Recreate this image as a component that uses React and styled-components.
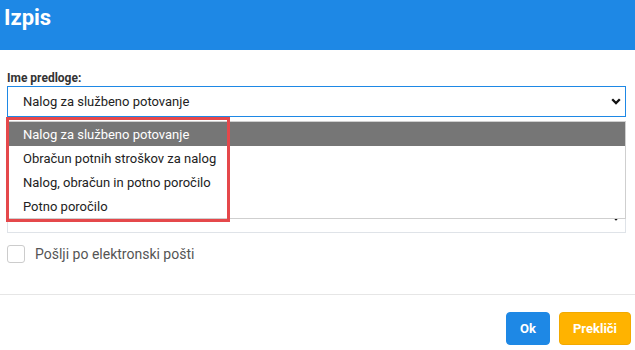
import React from "react";
import styled, { createGlobalStyle } from "styled-components";

const Global = createGlobalStyle`
  html, body { margin: 0; padding: 0; background: #fff; }
  body { font-family: Roboto, "Liberation Sans", Arial, sans-serif; }
  * { box-sizing: border-box; }
`;

const Dialog = styled.div`
  width: 635px;
  height: 350px;
  display: flex;
  flex-direction: column;
  background: #fff;
  overflow: hidden;
`;

const Header = styled.div`
  height: 50px;
  flex: none;
  background: #1e88e5;
  padding: 5px 4px 0;
`;

const Title = styled.h1`
  margin: 0;
  color: #fff;
  font-size: 22px;
  line-height: 26px;
  font-weight: 700;
`;

const Body = styled.div`
  padding: 20px 9px 0 7px;
  display: flex;
  flex-direction: column;
  gap: 11px;
  flex: 1;
`;

const Group = styled.div`
  position: relative;
  display: flex;
  flex-direction: column;
`;

const Label = styled.label`
  font-size: 12px;
  line-height: 16px;
  font-weight: 700;
  color: #333;
`;

const SelectBox = styled.div`
  height: 31px;
  display: flex;
  align-items: center;
  justify-content: space-between;
  padding: 0 4px 0 15px;
  border: 1px solid ${(p) => (p.$focused ? "#1e88e5" : "#dfe3e8")};
  background: #fff;
  font-size: 13px;
  color: #222;
`;

const Chevron = () => (
  <svg width="10" height="7" viewBox="0 0 10 7">
    <path d="M1.2 1.2 L5 5 L8.8 1.2" fill="none" stroke="#111" strokeWidth="2.3" />
  </svg>
);

const Menu = styled.ul`
  position: absolute;
  top: calc(100% + 4px);
  left: 0;
  right: 0;
  margin: 0;
  padding: 0;
  list-style: none;
  background: #fff;
  border: 1px solid #cfcfcf;
  z-index: 2;
`;

const Option = styled.li`
  height: 24px;
  display: flex;
  align-items: center;
  padding-left: 15px;
  font-size: 13px;
  color: ${(p) => (p.$active ? "#fff" : "#222")};
  background: ${(p) => (p.$active ? "#767676" : "transparent")};
`;

const Highlight = styled.div`
  position: absolute;
  top: 100%;
  left: -1px;
  width: 224px;
  height: 105px;
  border: 3px solid #e5484b;
  z-index: 3;
  pointer-events: none;
`;

const CheckRow = styled.label`
  margin-top: 1px;
  display: flex;
  align-items: center;
  gap: 10px;
  font-size: 14px;
  color: #555;
`;

const Box = styled.span`
  width: 18px;
  height: 18px;
  border: 1px solid #cccccc;
  border-radius: 3px;
  background: #fff;
`;

const Footer = styled.div`
  flex: none;
  margin-top: 30px;
  border-top: 1px solid #e6e6e6;
  display: flex;
  justify-content: flex-end;
  gap: 9px;
  padding: 17px 4px 5px;
`;

const Button = styled.button`
  height: 33px;
  min-width: ${(p) => p.$w}px;
  border-radius: 4px;
  border: 1px solid ${(p) => (p.$variant === "warn" ? "#f2a900" : "#1e88e5")};
  background: ${(p) => (p.$variant === "warn" ? "#ffb300" : "#1e88e5")};
  color: #fff;
  font-family: inherit;
  font-size: 13px;
  font-weight: 700;
  padding: 0 12px;
`;

const options = [
  "Nalog za službeno potovanje",
  "Obračun potnih stroškov za nalog",
  "Nalog, obračun in potno poročilo",
  "Potno poročilo",
];

export default function App() {
  return (
    <Dialog>
      <Global />
      <Header>
        <Title>Izpis</Title>
      </Header>
      <Body>
        <Group>
          <Label>Ime predloge:</Label>
          <SelectBox $focused>
            <span>Nalog za službeno potovanje</span>
            <Chevron />
          </SelectBox>
          <Menu>
            {options.map((o, i) => (
              <Option key={o} $active={i === 0}>
                {o}
              </Option>
            ))}
          </Menu>
          <Highlight />
        </Group>
        <Group>
          <Label>Jezik:</Label>
          <SelectBox>
            <span>Slovenski</span>
            <Chevron />
          </SelectBox>
        </Group>
        <Group>
          <Label>Format:</Label>
          <SelectBox>
            <span>PDF</span>
            <Chevron />
          </SelectBox>
        </Group>
        <CheckRow>
          <Box />
          <span>Pošlji po elektronski pošti</span>
        </CheckRow>
      </Body>
      <Footer>
        <Button $w={44}>Ok</Button>
        <Button $w={72} $variant="warn">Prekliči</Button>
      </Footer>
    </Dialog>
  );
}
